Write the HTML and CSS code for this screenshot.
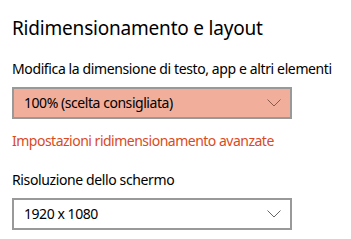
FILE: index.html
```html
<!DOCTYPE html>
<html lang="it">
<head>
  <meta charset="UTF-8">
  <title>Schermo</title>
  <link rel="stylesheet" href="styles.css">
</head>
<body>
  <div class="panel">
    <h2>Ridimensionamento e layout</h2>

    <div class="field">
      <label>Modifica la dimensione di testo, app e altri elementi</label>
      <div class="select highlight">
        <span>100% (scelta consigliata)</span>
        <svg class="chev" width="14" height="8" viewBox="0 0 14 8"><path d="M0.5 0.5 L7 7 L13.5 0.5" fill="none" stroke="currentColor" stroke-width="1"/></svg>
      </div>
    </div>

    <a class="link" href="#">Impostazioni ridimensionamento avanzate</a>

    <div class="field">
      <label>Risoluzione dello schermo</label>
      <div class="select">
        <span>1920 x 1080</span>
        <svg class="chev" width="14" height="8" viewBox="0 0 14 8"><path d="M0.5 0.5 L7 7 L13.5 0.5" fill="none" stroke="currentColor" stroke-width="1"/></svg>
      </div>
    </div>
  </div>
</body>
</html>
```

FILE: styles.css
```css
* { margin: 0; padding: 0; box-sizing: border-box; }

body {
  font-family: 'Noto Sans', 'Open Sans', sans-serif;
  background: #ffffff;
  color: #000000;
  overflow: hidden;
}

.panel {
  padding: 15px 12px 0 12px;
  display: flex;
  flex-direction: column;
}

h2 {
  font-size: 19px;
  font-weight: 400;
  line-height: 26px;
  letter-spacing: -0.2px;
  margin-bottom: 18px;
}

.field {
  display: flex;
  flex-direction: column;
}

label {
  font-size: 14px;
  line-height: 20px;
  letter-spacing: -0.38px;
  white-space: nowrap;
  margin-bottom: 8px;
}

.select {
  width: 280px;
  height: 32px;
  border: 2px solid #999999;
  padding: 0 8px 0 10px;
  display: flex;
  align-items: center;
  justify-content: space-between;
  font-size: 14px;
  letter-spacing: -0.45px;
  color: #000;
}

.select span {
  margin-top: -2px;
}

.select .chev {
  color: #666;
  margin-right: 1px;
}

.select.highlight {
  background: #f1af9b;
}

.select.highlight .chev {
  color: #8a5a4c;
}

.link {
  font-size: 14px;
  line-height: 20px;
  letter-spacing: -0.5px;
  color: #da4a1c;
  text-decoration: none;
  margin-top: 12px;
  margin-bottom: 19px;
}
```
